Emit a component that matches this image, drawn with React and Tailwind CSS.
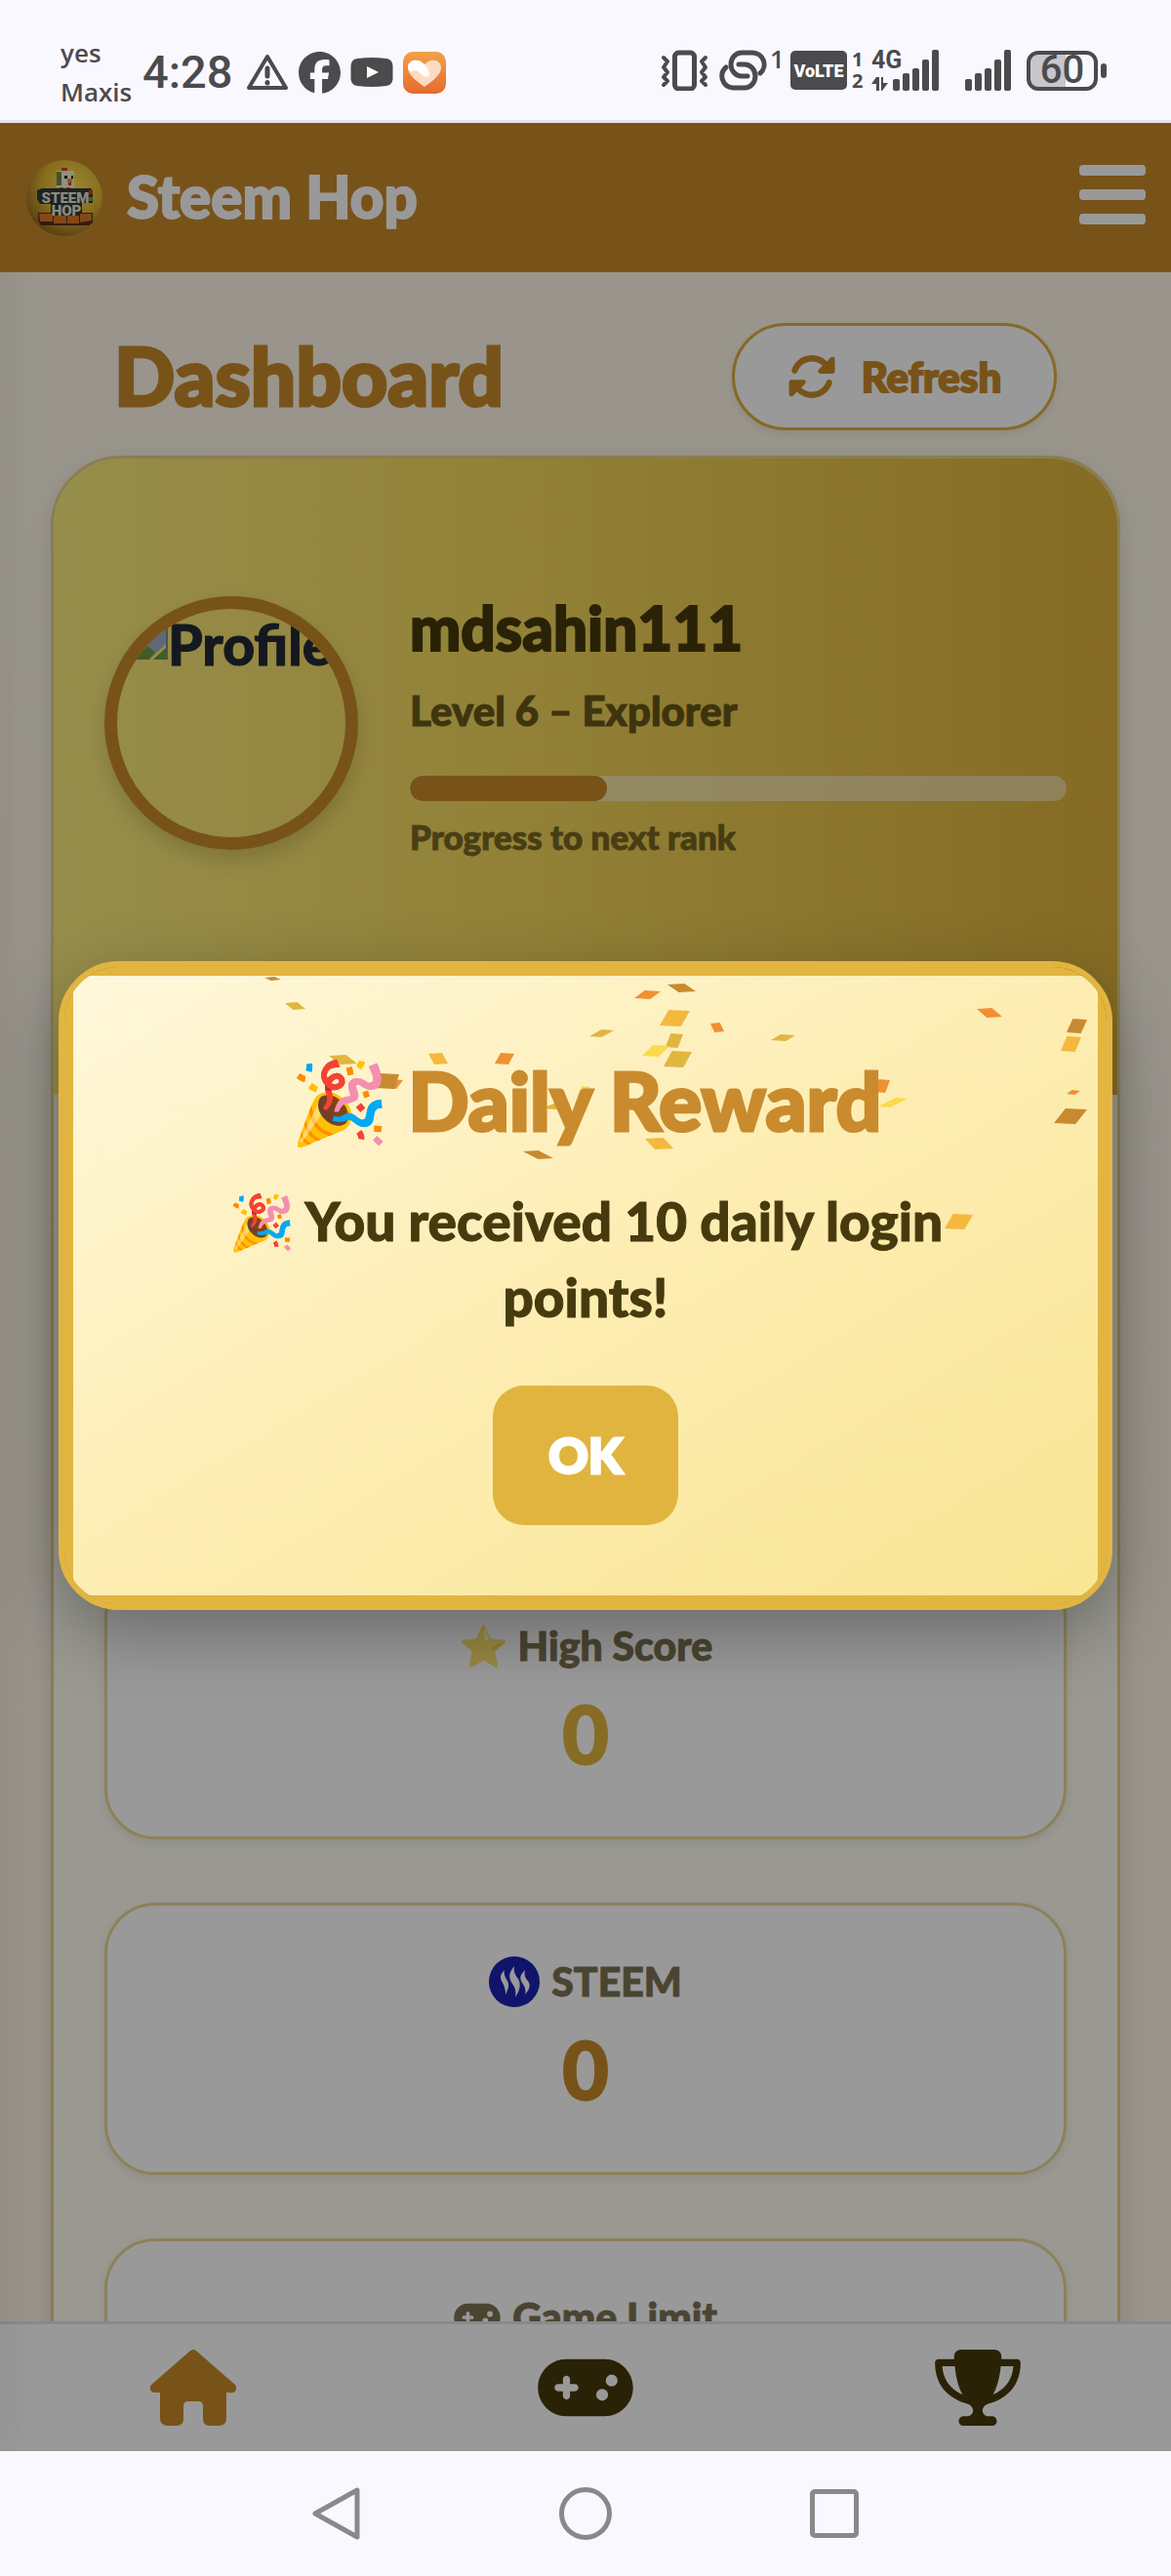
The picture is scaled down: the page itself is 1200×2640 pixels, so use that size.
import React, { useState } from 'react';
import { FaRotate, FaGamepad, FaTrophy, FaFacebook } from 'react-icons/fa6';

const stats = [
  { label: 'High Score', icon: 'star', value: 0, color: 'text-[#e0b43e]' },
  { label: 'STEEM', icon: 'steem', value: 0, color: 'text-[#c88a2a]' },
  { label: 'Game Limit', icon: 'gamepad', value: 0, color: 'text-[#c88a2a]' },
];

// x, y, width, height, lean (fraction of the width), color
const confetti = [
  [205, 10, 17, 4, -0.4, '#c88a2e'],
  [226, 36, 21, 8, -0.4, '#e0b63f'],
  [538, 64, 25, 8, 0.5, '#e0b63f'],
  [271, 90, 29, 10, -0.4, '#e0b63f'],
  [373, 88, 20, 12, -0.3, '#f4b93c'],
  [441, 88, 20, 12, 0.3, '#f09033'],
  [330, 115, 17, 10, 0.4, '#f09033'],
  [318, 109, 25, 16, 0.2, '#c88a2e'],
  [489, 139, 30, 7, 0.5, '#e0b63f'],
  [399, 147, 12, 10, 0.3, '#e0b63f'],
  [470, 188, 31, 9, -0.5, '#c88a2e'],
  [529, 122, 10, 4, 0.2, '#f8da4a'],
  [584, 24, 27, 9, 0.4, '#f09033'],
  [618, 17, 29, 9, -0.4, '#c88a2e'],
  [610, 44, 31, 17, 0.3, '#f4b93c'],
  [616, 68, 18, 15, 0.3, '#e0b63f'],
  [592, 80, 28, 12, 0.4, '#f8da4a'],
  [614, 86, 29, 17, 0.3, '#e0b63f'],
  [662, 57, 14, 10, -0.3, '#f09033'],
  [724, 69, 25, 7, 0.4, '#e0b63f'],
  [935, 42, 26, 10, -0.4, '#f09033'],
  [1027, 53, 21, 15, 0.3, '#c88a2e'],
  [1021, 71, 21, 16, 0.3, '#f4b93c'],
  [1027, 126, 14, 5, 0.4, '#f09033'],
  [1014, 145, 34, 16, 0.35, '#c88a2e'],
  [830, 115, 16, 14, 0.3, '#f09033'],
  [834, 134, 30, 10, 0.6, '#f8da4a'],
  [595, 175, 29, 12, -0.35, '#f4b93c'],
  [902, 253, 29, 16, 0.3, '#f4b93c'],
];

const Confetti = () => (
  <svg viewBox="9 9 1050 635" className="absolute inset-x-0 top-0 w-full" aria-hidden="true">
    {confetti.map(([x, y, w, h, lean, color], i) => {
      const s = Math.abs(lean) * w;
      const points = lean > 0
        ? `${x + s},${y} ${x + w},${y + 1} ${x + w - s},${y + h} ${x},${y + h - 1}`
        : `${x},${y + 1} ${x + w - s},${y} ${x + w},${y + h - 1} ${x + s},${y + h}`;
      return <polygon key={i} points={points} fill={color} />;
    })}
  </svg>
);

const SignalBars = () => (
  <svg width="47" height="42" viewBox="0 0 47 42" fill="#4b4b4d" aria-hidden="true">
    <rect x="0" y="30" width="7" height="12" rx="2" />
    <rect x="10" y="24" width="7" height="18" rx="2" />
    <rect x="20" y="19" width="7" height="23" rx="2" />
    <rect x="30" y="10" width="7" height="32" rx="2" />
    <rect x="40" y="0" width="7" height="42" rx="2" />
  </svg>
);

const StatusBar = () => (
  <div className="flex h-[126px] shrink-0 items-start justify-between border-b-[3px] border-[#e6e4e9] bg-[#faf8ff] pt-[34px] pr-[66px] pl-[62px] font-['Open_Sans',sans-serif] text-[#4b4b4d]">
    <div className="flex items-center">
      <div className="w-[84px] text-[26px] leading-[40px] font-semibold">
        <div>yes</div>
        <div>Maxis</div>
      </div>
      <div className="flex h-[76px] items-center">
        <span className="w-[106px] font-['Roboto',sans-serif] text-[47px] leading-[60px] font-medium">4:28</span>
      </div>
      <div className="flex items-center gap-[10px]">
        <svg width="44" height="42" viewBox="0 0 44 42" fill="none" stroke="#4b4b4d" strokeWidth="5" strokeLinejoin="round" strokeLinecap="round" aria-hidden="true">
          <path d="M22 5 41 37H3Z" strokeWidth="4" />
          <path d="M22 17v8M22 31.500v.5" />
        </svg>
        <FaFacebook className="h-[43px] w-[43px]" />
        <svg width="44" height="42" viewBox="0 0 44 42" aria-hidden="true">
          <path d="M7 7Q22 5 37 7 43 8 43.500 14v14q-.5 6-6.500 7-15 2-30 0-6-1-6.500-7V14Q1 8 7 7Z" fill="#4b4b4d" />
          <path d="M17 15v12l12-6Z" fill="#fff" />
        </svg>
        <svg width="44" height="43" viewBox="0 0 44 43" aria-hidden="true">
          <defs>
            <linearGradient id="heartBg" x1="0" y1="0" x2="0" y2="1">
              <stop offset="0" stopColor="#f2a148" />
              <stop offset="1" stopColor="#e66a30" />
            </linearGradient>
          </defs>
          <rect width="44" height="43" rx="10" fill="url(#heartBg)" />
          <path d="M22 36C14 30 5 24 5 16 5 8 16 6 22 13c6-7 17-5 17 3 0 8-9 14-17 20Z" fill="#fbdcc3" />
          <path d="M22 13C16 6 5 8 5 16c0 2 1 4 4 4 4-3 8 2 12 5q6 2 6-3-1-5-5-9Z" fill="#fff" />
        </svg>
      </div>
    </div>

    <div className="flex h-[76px] items-center">
      <svg width="49" height="42" viewBox="0 0 49 42" fill="none" stroke="#4b4b4d" strokeWidth="4" strokeLinejoin="round" strokeLinecap="round" aria-hidden="true">
        <rect x="14.500" y="3" width="20" height="37" rx="4" strokeWidth="5" />
        <path d="M3 8l4 4-4 6 4 5-4 5 4 4-4 4M46 8l-4 4 4 6-4 5 4 5-4 4 4 4" />
      </svg>
      <svg className="ml-[11px]" width="49" height="42" viewBox="0 0 49 42" fill="none" stroke="#4b4b4d" strokeWidth="5" strokeLinecap="round" aria-hidden="true">
        <path d="M29 27h-6A11 12 0 0 1 23 3h11a12 12 0 0 1 8 21" />
        <path d="M20 15h6a11 12 0 0 1 0 24H14A12 12 0 0 1 7 18" />
      </svg>
      <span className="mb-[24px] ml-[3px] w-[21px] text-[26px] leading-[24px] font-semibold">1</span>
      <span className="flex h-[40px] w-[58px] items-center justify-center rounded-[5px] bg-[#4b4b4d] font-['Roboto',sans-serif] text-[18px] font-black text-white">VoLTE</span>
      <span className="ml-[5px] flex w-[20px] flex-col text-[20px] leading-[22px] font-bold">
        <span>1</span>
        <span>2</span>
      </span>
      <span className="flex h-[42px] w-[22px] flex-col justify-between">
        <span className="font-['Roboto',sans-serif] text-[25px] leading-[22px] font-bold">4G</span>
        <svg width="17" height="14" viewBox="0 0 17 14" fill="#4b4b4d" aria-hidden="true">
          <path d="M0 7 5 0h3v14H5V7ZM10 0h2v6h5l-6 8h-1Z" />
        </svg>
      </span>
      <SignalBars />
      <span className="w-[27px]" />
      <SignalBars />
      <span className="ml-[16px] flex h-[41px] w-[73px] items-center justify-center rounded-[12px] border-4 border-[#4b4b4d] bg-[linear-gradient(90deg,#c8c6cb_55%,transparent_55%)] font-['Roboto',sans-serif] text-[40px] leading-[34px] font-medium">60</span>
      <span className="ml-[3px] h-[15px] w-[6px] rounded-[3px] bg-[#4b4b4d]" />
    </div>
  </div>
);

const AppLogo = () => (
  <svg width="78" height="78" viewBox="0 0 78 78" aria-hidden="true">
    <defs>
      <radialGradient id="logoBg" cx=".6" cy=".35" r=".7">
        <stop offset="0" stopColor="#ffe45a" />
        <stop offset=".55" stopColor="#e2b832" />
        <stop offset="1" stopColor="#8f6420" />
      </radialGradient>
    </defs>
    <circle cx="39" cy="39" r="39" fill="url(#logoBg)" />
    <path d="M36 8h6v4h-6Z" fill="#d2402a" />
    <path d="M31 11h18v17H31Z" fill="#f4efd2" />
    <path d="M31 12h5v14h-5Z" fill="#6d8a4a" />
    <path d="M39 16h3v3h-3ZM46 16h2v3h-2Z" fill="#222" />
    <path d="M42 19h5v4h-5Z" fill="#ee9a2c" />
    <path d="M43 23h3v3h-3Z" fill="#c93a22" />
    <path d="M34 28h4v4h-4ZM41 28h4v4h-4Z" fill="#c96a1c" />
    <path d="M11 31 16 29h50l2 3v12H57v13H25V45H14l-3-5Z" fill="#333a38" />
    <path d="M64 31h4v4h-4Z" fill="#d2402a" />
    <path d="M64 38h4v4h-4Z" fill="#5fa044" />
    <path d="M12 54h56v10l-4 3H15l-3-5Z" fill="#5b2f14" />
    <path d="M13 55h14v8H14ZM28 57h13v8H28ZM42 57h12v8H42ZM55 55h12v7l-12 2Z" fill="#d9782c" />
    <text x="40" y="44" textAnchor="middle" fontFamily="Roboto, sans-serif" fontWeight="900" fontSize="15" fill="#e8e4d6">STEEM</text>
    <text x="41" y="57" textAnchor="middle" fontFamily="Roboto, sans-serif" fontWeight="900" fontSize="15" fill="#e8e4d6">HOP</text>
  </svg>
);

const SteemLogo = () => (
  <svg width="52" height="52" viewBox="0 0 52 52" aria-hidden="true">
    <circle cx="26" cy="26" r="26" fill="#1b23b3" />
    <g fill="#fff">
      <path d="M16 14c-1 5 1 8 3 11 2 4 1 9-2 14 0-5-1-8-3-12-3-5-3-8 2-13Z" />
      <path d="M26 10c-1 6 1 9 4 13 3 5 2 12-3 19 1-6 0-10-3-14-4-6-4-11 2-18Z" />
      <path d="M37 14c-1 5 0 8 3 11 3 4 2 9-3 14 1-5 0-8-3-12-3-5-2-8 3-13Z" />
    </g>
  </svg>
);

const Header = () => (
  <header className="relative z-10 flex h-[153px] shrink-0 items-center justify-between bg-[#c88a2a] pr-[26px] pl-[27px]">
    <div className="flex items-center gap-[25px]">
      <AppLogo />
      <span className="pb-[4px] text-[60px] leading-[72px] font-black text-white [-webkit-text-stroke-width:2px]">Steem Hop</span>
    </div>
    <button type="button" aria-label="Menu" className="mb-[6px] flex w-[68px] flex-col gap-[14px]">
      <span className="h-[11px] rounded-[4px] bg-white" />
      <span className="h-[11px] rounded-[4px] bg-white" />
      <span className="h-[11px] rounded-[4px] bg-white" />
    </button>
  </header>
);

const BrokenImage = () => (
  <svg width="33" height="32" viewBox="0 0 33 32" className="shrink-0" aria-hidden="true">
    <path d="M0 0h33v14L16 30H0Z" fill="#9fb0c8" />
    <path d="M0 30 12 18l8 6-6 8H0Z" fill="#6b9c3f" />
    <path d="M33 18v14H18Z" fill="#6b9c3f" />
    <path d="M32 0v32" stroke="#7d8796" strokeWidth="2" />
  </svg>
);

const ProfileBanner = () => (
  <section className="flex h-[652px] items-start gap-[53px] rounded-t-[69px] bg-linear-to-r from-[#faec7e] via-[#f5da5f] via-40% to-[#deb33c] px-[52px] pt-[141px]">
    <div className="h-[260px] w-[260px] shrink-0 overflow-hidden rounded-full border-[13px] border-[#c88a2a] shadow-[0_10px_20px_rgba(0,0,0,0.15)]">
      <div className="mt-[6px] ml-[19px] flex items-center text-[57px] leading-[60px] font-black text-[#232b35]">
        <BrokenImage />
        <span>Profile</span>
      </div>
    </div>
    <div className="flex-1 text-[#463a0a]">
      <h2 className="text-[62px] leading-[64px] font-black [-webkit-text-stroke-width:2px]">mdsahin111</h2>
      <p className="mt-[28px] text-[42px] leading-[50px] font-black opacity-80">Level 6 – Explorer</p>
      <div className="mt-[42px] h-[26px] overflow-hidden rounded-full bg-white/45">
        <div className="h-full w-[30%] rounded-full bg-[#c88a2a]" />
      </div>
      <p className="mt-[16px] text-[35px] leading-[40px] font-black opacity-70">Progress to next rank</p>
    </div>
  </section>
);

const StatCard = ({ label, icon, value, color }) => (
  <div className="flex h-[279px] shrink-0 flex-col items-center rounded-[52px] border-[3px] border-[#ead793] bg-white pt-[50px] shadow-[0_4px_10px_rgba(0,0,0,0.08)]">
    <div className="flex h-[56px] items-center gap-[12px] text-[41px] leading-[52px] font-black text-[#463a0a]">
      {icon === 'steem' && <SteemLogo />}
      {icon === 'gamepad' && <FaGamepad className="h-[38px] w-[48px] opacity-70" />}
      <span className="opacity-70">{icon === 'star' ? `⭐ ${label}` : label}</span>
    </div>
    <div className={`mt-[19px] text-[82px] leading-[84px] font-black [-webkit-text-stroke-width:2px] ${color}`}>{value}</div>
  </div>
);

const BottomNav = () => (
  <nav className="flex h-[133px] shrink-0 items-center justify-around border-t-[3px] border-[#e3e5e9] bg-white text-[#463a0a]">
    <a href="#home" aria-label="Home" className="text-[#c88a2a]">
      <svg width="88" height="78" viewBox="0 0 88 78" fill="currentColor" aria-hidden="true">
        <path d="M40 2q4-4 8 0l39 34q2 3 .500 6T82 44h-4v26q0 8-8 8H61q-7 0-7-7V58q0-5-5-5H39q-5 0-5 5v13q0 7-7 7H18q-8 0-8-8V44H5q-3.500 0-5-2.500T1 36Z" />
      </svg>
    </a>
    <a href="#play" aria-label="Play"><FaGamepad className="h-[78px] w-[98px]" /></a>
    <a href="#ranking" aria-label="Ranking"><FaTrophy className="h-[78px] w-[88px]" /></a>
  </nav>
);

const RewardModal = ({ onClose }) => (
  <div className="absolute inset-0 z-20 flex items-center justify-center bg-black/40 pb-[3px]">
    <div role="dialog" aria-labelledby="reward-title" className="relative w-[90%] overflow-hidden rounded-[62px] border-[6px] border-[#e2b540] shadow-[0_24px_70px_rgba(0,0,0,0.3)]">
      <div className="relative border-[9px] border-[#e2b540] bg-linear-to-br from-[#fff8db] via-[#fdedb2] to-[#f9e593] px-[120px] pt-[85px] pb-[72px] text-center">
        <Confetti />
        <h2 id="reward-title" className="relative text-[82px] leading-[84px] font-black whitespace-nowrap text-[#c98b2e] [-webkit-text-stroke-width:3px]">🎉 Daily Reward</h2>
        <p className="relative mt-[43px] text-[55px] leading-[78px] font-black text-[#463a0e]">🎉 You received 10 daily login points!</p>
        <button type="button" onClick={onClose} className="relative mt-[52px] h-[143px] w-[190px] rounded-[32px] bg-[#e0b43e] text-[50px] font-black text-white [-webkit-text-stroke-width:3px]">
          OK
        </button>
      </div>
    </div>
  </div>
);

const SystemNav = () => (
  <div className="flex h-[128px] shrink-0 items-center justify-center gap-[201px] bg-[#faf8ff] text-[#898989]">
    <button type="button" aria-label="Back">
      <svg width="54" height="54" viewBox="0 0 54 54" fill="none" stroke="currentColor" strokeWidth="5" strokeLinejoin="round" aria-hidden="true">
        <path d="M48 3v48L5 27Z" />
      </svg>
    </button>
    <button type="button" aria-label="Home screen" className="h-[54px] w-[54px] rounded-full border-[5px] border-current" />
    <button type="button" aria-label="Recent apps" className="flex h-[54px] w-[54px] items-center justify-center">
      <span className="h-[50px] w-[50px] rounded-[5px] border-[5px] border-current" />
    </button>
  </div>
);

const App = () => {
  const [showReward, setShowReward] = useState(true);

  return (
    <div className="flex h-screen flex-col">
      <StatusBar />
      <div className="relative flex min-h-0 flex-1 flex-col overflow-hidden font-['Lato',sans-serif] [-webkit-text-stroke-width:1px]">
        <Header />
        <main className="flex min-h-0 flex-1 flex-col overflow-hidden bg-linear-to-b from-[#fff9ea] to-[#fff5e6] px-[52px] pt-[52px]">
          <div className="flex items-center justify-between px-[65px]">
            <h1 className="pb-[4px] text-[82px] leading-[90px] font-black text-[#c88a2a] [-webkit-text-stroke-width:3px]">Dashboard</h1>
            <button type="button" className="flex h-[110px] w-[333px] items-center justify-center gap-[26px] rounded-full border-[3px] border-[#deb140] bg-white text-[42px] font-black text-[#c88a2a] shadow-[0_4px_8px_rgba(0,0,0,0.08)] [-webkit-text-stroke-width:2px]">
              <FaRotate className="h-[50px] w-[50px]" />
              Refresh
            </button>
          </div>
          <div className="mt-[26px] shrink-0 rounded-[72px] border-[3px] border-[#e6d085] bg-[#fffdf2] shadow-[0_8px_24px_rgba(0,0,0,0.12)]">
            <ProfileBanner />
            <div className="flex flex-col gap-[65px] px-[52px] pt-[484px] pb-[52px]">
              {stats.map(stat => (
                <StatCard key={stat.label} {...stat} />
              ))}
            </div>
          </div>
        </main>
        <BottomNav />
        {/* edge shadow of the closed side drawer */}
        <div className="absolute inset-y-0 right-full w-4 shadow-[0_0_40px_rgba(0,0,0,0.12)]" />
        {showReward && <RewardModal onClose={() => setShowReward(false)} />}
      </div>
      <SystemNav />
    </div>
  );
};

export default App;
